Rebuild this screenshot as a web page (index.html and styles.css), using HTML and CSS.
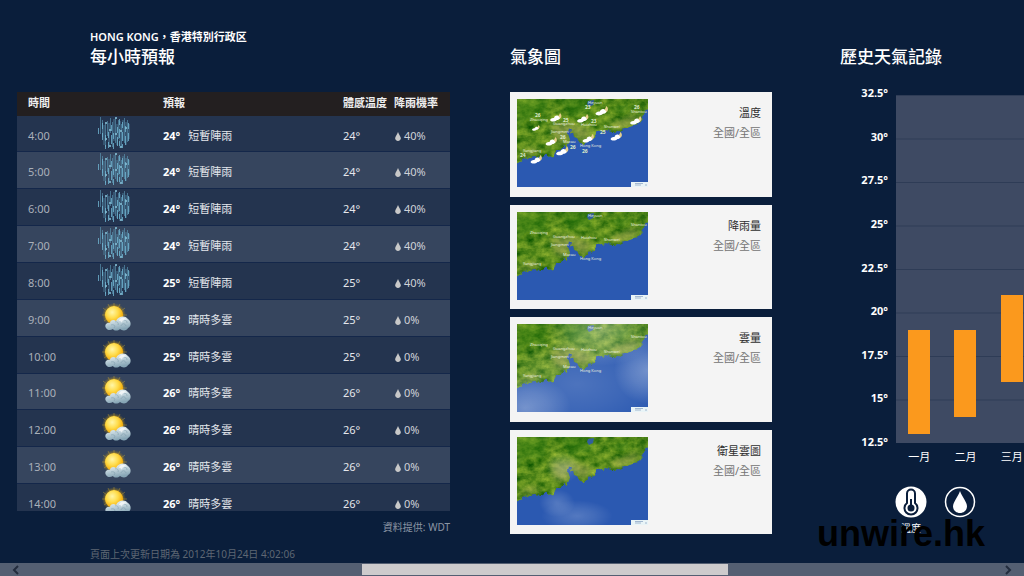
FILE: index.html
```html
<!DOCTYPE html>
<html lang="zh-Hant">
<head>
<meta charset="utf-8">
<meta name="viewport" content="width=device-width, initial-scale=1">
<title>天氣 - 香港</title>
<link rel="stylesheet" href="styles.css">
</head>
<body>
<svg class="defs" width="0" height="0" aria-hidden="true">
  <defs>
    <radialGradient id="sunFill" cx="0.4" cy="0.35" r="0.65">
      <stop offset="0" stop-color="#fff6a8"/><stop offset="0.5" stop-color="#ffdc4a"/><stop offset="1" stop-color="#f2a400"/>
    </radialGradient>
    <radialGradient id="sunGlow">
      <stop offset="0.6" stop-color="#e8a800" stop-opacity="0.8"/><stop offset="1" stop-color="#a08020" stop-opacity="0"/>
    </radialGradient>
    <linearGradient id="cloudFill" x1="0" y1="0" x2="0.3" y2="1">
      <stop offset="0" stop-color="#f2f8fa"/><stop offset="0.5" stop-color="#c3d5dd"/><stop offset="1" stop-color="#86a5b5"/>
    </linearGradient>
    <radialGradient id="haze"><stop offset="0" stop-color="#fff" stop-opacity="0.32"/><stop offset="0.5" stop-color="#fff" stop-opacity="0.18"/><stop offset="1" stop-color="#fff" stop-opacity="0"/></radialGradient>
    <filter id="terrain" x="0" y="0" width="1" height="1" color-interpolation-filters="sRGB">
      <feTurbulence type="fractalNoise" baseFrequency="0.1 0.13" numOctaves="4" seed="8"/>
      <feColorMatrix values="0.7 0 0 0 -0.01  0.5 0 0 0 0.29  0.25 0 0 0 -0.02  0 0 0 0 1"/>
    </filter>
    <filter id="rough" x="-0.1" y="-0.1" width="1.2" height="1.2">
      <feTurbulence type="fractalNoise" baseFrequency="0.2" numOctaves="2" seed="3"/>
      <feDisplacementMap in="SourceGraphic" scale="5" xChannelSelector="R" yChannelSelector="G"/>
    </filter>
    <filter id="soft"><feGaussianBlur stdDeviation="3"/></filter>
    <mask id="landMask">
      <path filter="url(#rough)" fill="#fff" d="M-6-6H140V2L131 10L127 15L125 20L121 25L114 28L108 29L103 32L95 33L90 31L83 32L77 35L75 40L70 41L67 46L63 43L60 38L56 37L54 32L52 29L51 34L53 41L50 48L46 46L44 51L39 51L36 57L32 58L29 55L24 58L17 57L11 59L5 61L-6 66Z"/>
    </mask>
    <symbol id="rain" viewBox="0 0 34 34">
      <g fill="none" stroke="#5f9fbd">
        <path opacity="0.6" d="M3.500 1V18M5.500 4V21M8.500 8V31M10.500 5V20M13.500 2V17M15.500 6V31M18.500 2V27M21.500 4V23M24.500 8V31M27.500 2V27M30.500 4V26"/>
        <path opacity="0.3" stroke-width="2" d="M7 9V29M12 7V30M17 3V25M20 8V29M23 5V32M26 4V25M29 6V29M32 8V23"/>
        <path opacity="0.75" stroke="#74bcd9" stroke-dasharray="6 4 9 3" d="M1.500 12V21M5.500 7V24M8.500 19V33M11.500 16V32M14.500 9V28M16.500 17V33M20.500 11V30M22.500 3V30M25.500 6V32M28.500 10V30M31.500 7V25"/>
        <path opacity="0.8" stroke="#83bdd3" stroke-width="2" stroke-dasharray="2 14" d="M9 6V29M13 13V33M19 1V32M24 14V33M29 11V27"/>
      </g>
    </symbol>
    <symbol id="suncloud" viewBox="0 0 30 30">
      <circle cx="12" cy="12" r="12" fill="url(#sunGlow)"/>
      <path stroke="#edbd29" stroke-width="0.7" opacity="0.5" d="M12-1V4M6 1L8 5M1 5L5 8M-1 12H4M2 18L5 16M5 23L8 19M12 25V20M18 1L16 5M23 5L19 8M25 12H20"/>
      <circle cx="12" cy="12" r="9" fill="url(#sunFill)"/>
      <path fill="url(#cloudFill)" d="M4 25C2 22 5 19 8 20C8 17 12 16 14 18C16 13 23 12 26 16C30 19 29 24 26 25C25 28 20 28 18 26C16 28 12 28 11 26C8 28 5 27 4 25Z"/>
      <path fill="none" stroke="#7897a7" stroke-width="1" opacity="0.5" d="M13 19C15 18 17 20 16 22M9 22C12 21 14 23 12 25M19 23C20 20 23 20 24 23M22 17C24 17 25 18 25 20"/>
      <path fill="#fff" opacity="0.7" d="M17 18C18 14 23 14 25 17C22 16 20 17 20 20C19 18 18 18 17 18Z"/>
    </symbol>
    <symbol id="drop" viewBox="0 0 14 22"><path d="M7 0C9 6 14 11 14 15.500C14 19 11 22 7 22S0 19 0 15.500C0 11 5 6 7 0Z"/></symbol>
    <symbol id="map" viewBox="0 0 131 88">
      <rect width="131" height="88" fill="#2b59b1"/>
      <g mask="url(#landMask)">
        <rect width="131" height="88" filter="url(#terrain)"/>
        <path filter="url(#soft)" fill="#b7ad66" opacity="0.5" d="M34 26L51 24L64 27L76 32L66 44L54 33L50 46L38 42ZM90 27L118 16L124 20L105 30ZM0 58L14 50L24 53L10 58Z"/>
        <path filter="url(#soft)" fill="#2a780c" opacity="0.4" d="M0 0H32L26 22L8 20L0 38ZM42 0H70L78 14L52 18ZM90 8L116 4L106 16Z"/>
      </g>
      <path fill="#315f9a" d="M71 2L77 1L76 6L72 8L70 5Z"/>
      <path fill="#e9f4f7" d="M114 83H131V88H114Z"/>
      <path stroke="#8fa8c6" stroke-width="0.8" d="M118 84.500H126M118 86H124M128 86H130"/>
    </symbol>
    <symbol id="moon" viewBox="0 0 12 9">
      <path fill="#e6cf8d" d="M10 0C12 2 12 5 9 6C7 7 5 6 4 5C7 5 9 3 10 0Z"/>
      <path fill="#fff" d="M0 7C1 5 3 5 4 5C5 2 8 2 9 4C11 5 9 7 7 7C5 9 1 9 0 7Z"/>
    </symbol>
    <symbol id="places" viewBox="0 0 131 88">
      <g class="place">
        <text x="71" y="5">Heyuan</text><text x="13" y="22">Zhaoqing</text>
        <text x="36" y="26">Guangzhou</text><text x="64" y="27">Huizhou</text>
        <text x="34" y="34">Jiangmen</text><text x="46" y="44">Macau</text>
        <text x="63" y="48">Hong Kong</text><text x="6" y="53">Yangjiang</text>
        <text x="87" y="29">Shanwei</text><text x="114" y="14">Shantou</text>
      </g>
    </symbol>
  </defs>
</svg>

<main class="hub">
  <section class="panel hourly">
    <header class="panel-head inset">
      <p class="place-name">HONG KONG，香港特別行政区</p>
      <h1 class="title">每小時預報</h1>
    </header>
    <div class="table-clip">
      <table class="forecast">
        <colgroup><col class="c-time"><col class="c-icon"><col class="c-sky"><col class="c-feel"><col class="c-rain"></colgroup>
        <thead><tr><th scope="col">時間</th><th></th><th scope="col">預報</th><th scope="col">體感溫度</th><th scope="col">降雨機率</th></tr></thead>
        <tbody>
          <tr><td>4:00</td><td><svg class="rain"><use href="#rain"/></svg></td><td><b>24°</b>短暫陣雨</td><td>24°</td><td><svg class="drop"><use href="#drop"/></svg>40%</td></tr>
          <tr><td>5:00</td><td><svg class="rain"><use href="#rain"/></svg></td><td><b>24°</b>短暫陣雨</td><td>24°</td><td><svg class="drop"><use href="#drop"/></svg>40%</td></tr>
          <tr><td>6:00</td><td><svg class="rain"><use href="#rain"/></svg></td><td><b>24°</b>短暫陣雨</td><td>24°</td><td><svg class="drop"><use href="#drop"/></svg>40%</td></tr>
          <tr><td>7:00</td><td><svg class="rain"><use href="#rain"/></svg></td><td><b>24°</b>短暫陣雨</td><td>24°</td><td><svg class="drop"><use href="#drop"/></svg>40%</td></tr>
          <tr><td>8:00</td><td><svg class="rain"><use href="#rain"/></svg></td><td><b>25°</b>短暫陣雨</td><td>25°</td><td><svg class="drop"><use href="#drop"/></svg>40%</td></tr>
          <tr><td>9:00</td><td><svg class="sun"><use href="#suncloud"/></svg></td><td><b>25°</b>晴時多雲</td><td>25°</td><td><svg class="drop"><use href="#drop"/></svg>0%</td></tr>
          <tr><td>10:00</td><td><svg class="sun"><use href="#suncloud"/></svg></td><td><b>25°</b>晴時多雲</td><td>25°</td><td><svg class="drop"><use href="#drop"/></svg>0%</td></tr>
          <tr><td>11:00</td><td><svg class="sun"><use href="#suncloud"/></svg></td><td><b>26°</b>晴時多雲</td><td>26°</td><td><svg class="drop"><use href="#drop"/></svg>0%</td></tr>
          <tr><td>12:00</td><td><svg class="sun"><use href="#suncloud"/></svg></td><td><b>26°</b>晴時多雲</td><td>26°</td><td><svg class="drop"><use href="#drop"/></svg>0%</td></tr>
          <tr><td>13:00</td><td><svg class="sun"><use href="#suncloud"/></svg></td><td><b>26°</b>晴時多雲</td><td>26°</td><td><svg class="drop"><use href="#drop"/></svg>0%</td></tr>
          <tr><td>14:00</td><td><svg class="sun"><use href="#suncloud"/></svg></td><td><b>26°</b>晴時多雲</td><td>26°</td><td><svg class="drop"><use href="#drop"/></svg>0%</td></tr>
        </tbody>
      </table>
    </div>
    <p class="source">資料提供: WDT</p>
    <p class="updated">頁面上次更新日期為 2012年10月24日 4:02:06</p>
  </section>

  <section class="panel maps">
    <header class="panel-head"><h2 class="title">氣象圖</h2></header>
    <div class="cards">
      <a class="card" href="#temperature">
        <svg class="map" viewBox="0 0 131 88"><use href="#map"/><use href="#places"/>
          <g>
            <use href="#moon" x="15" y="25" width="8" height="8"/><use href="#moon" x="33" y="14" width="12" height="9"/>
            <use href="#moon" x="60" y="15" width="12" height="9"/><use href="#moon" x="78" y="7" width="14" height="10"/>
            <use href="#moon" x="113" y="17" width="12" height="9"/><use href="#moon" x="28" y="38" width="13" height="9"/>
            <use href="#moon" x="65" y="35" width="13" height="9"/><use href="#moon" x="93" y="33" width="13" height="9"/>
            <use href="#moon" x="39" y="47" width="13" height="10"/><use href="#moon" x="13" y="56" width="13" height="9"/>
          </g>
          <g class="reading"><text x="18" y="18">26</text><text x="46" y="23">25</text><text x="68" y="10">23</text><text x="74" y="24">23</text><text x="117" y="10">26</text><text x="43" y="40">26</text><text x="53" y="50">26</text><text x="83" y="35">25</text><text x="65" y="54">26</text><text x="3" y="58">24</text></g>
        </svg>
        <span class="card-text"><strong>溫度</strong><span>全國/全區</span></span>
      </a>
      <a class="card" href="#rainfall">
        <svg class="map" viewBox="0 0 131 88"><use href="#map"/><use href="#places"/></svg>
        <span class="card-text"><strong>降雨量</strong><span>全國/全區</span></span>
      </a>
      <a class="card" href="#clouds">
        <svg class="map" viewBox="0 0 131 88"><use href="#map"/>
          <g fill="url(#haze)"><ellipse cx="84" cy="6" rx="56" ry="36"/><ellipse cx="131" cy="46" rx="34" ry="34"/><ellipse cx="8" cy="84" rx="46" ry="32"/><ellipse cx="60" cy="60" rx="90" ry="50" opacity="0.5"/></g>
          <path fill="#e9f4f7" d="M114 83H131V88H114Z"/><path stroke="#8fa8c6" stroke-width="0.8" d="M118 84.500H126M118 86H124M128 86H130"/><use href="#places"/></svg>
        <span class="card-text"><strong>雲量</strong><span>全國/全區</span></span>
      </a>
      <a class="card" href="#satellite">
        <svg class="map" viewBox="0 0 131 88"><use href="#map"/><g fill="url(#haze)" opacity="0.6"><ellipse cx="60" cy="79" rx="36" ry="16"/><ellipse cx="40" cy="66" rx="18" ry="14"/><ellipse cx="46" cy="30" rx="18" ry="16"/></g></svg>
        <span class="card-text"><strong>衛星雲圖</strong><span>全國/全區</span></span>
      </a>
    </div>
  </section>

  <section class="panel history">
    <header class="panel-head"><h2 class="title">歷史天氣記錄</h2></header>
    <div class="chart">
      <div class="axis"><span>32.5°</span><span>30°</span><span>27.5°</span><span>25°</span><span>22.5°</span><span>20°</span><span>17.5°</span><span>15°</span><span>12.5°</span></div>
      <div class="plot">
        <div class="bar" style="grid-row: 28 / 40"></div>
        <div class="bar" style="grid-row: 28 / 38"></div>
        <div class="bar" style="grid-row: 24 / 34"></div>
      </div>
      <div class="months"><span>一月</span><span>二月</span><span>三月</span></div>
    </div>
    <div class="modes">
      <button class="mode" type="button" aria-pressed="true">
        <svg class="mode-icon" viewBox="0 0 32 32"><circle cx="16" cy="16" r="15.500" fill="#fff"/>
          <path fill="#fff" stroke="#0b1e3b" stroke-width="2" d="M12 17V7.500A4 4 0 0 1 20 7.500V17A6.500 6.500 0 1 1 12 17Z"/>
          <path stroke="#0b1e3b" stroke-width="2" d="M16 13V21"/><circle cx="16" cy="22" r="3.500" fill="#0b1e3b"/></svg>
        <span>溫度</span>
      </button>
      <button class="mode" type="button" aria-label="降雨量">
        <svg class="mode-icon" viewBox="0 0 32 32"><circle cx="16" cy="16" r="14.500" fill="none" stroke="#fff" stroke-width="1.500"/><use href="#drop" x="9" y="5" width="14" height="22" fill="#fff"/></svg>
      </button>
    </div>
  </section>
</main>

<div class="watermark">unwire.hk</div>

<nav class="scrollbar" aria-label="水平捲動">
  <button class="arrow" type="button" aria-label="向左"><svg viewBox="0 0 8 10"><path d="M6 1L2 5L6 9"/></svg></button>
  <div class="track"><div class="thumb" style="margin-left: 34.4%; width: 38.1%"></div></div>
  <button class="arrow" type="button" aria-label="向右"><svg viewBox="0 0 8 10"><path d="M2 1L6 5L2 9"/></svg></button>
</nav>
</body>
</html>
```
FILE: styles.css
```css
* { box-sizing: border-box; }

body {
  margin: 0;
  min-height: 100vh;
  display: flex;
  flex-direction: column;
  position: relative;
  overflow: hidden;
  background: #0a1e3b;
  color: #fff;
  font: 11px/16px "Noto Sans", "Noto Sans CJK TC", sans-serif;
}

p, h1, h2 { margin: 0; }

button {
  margin: 0;
  padding: 0;
  border: 0;
  background: none;
  color: inherit;
  font: inherit;
}

.defs { position: absolute; }

.hub {
  flex: 1;
  display: grid;
  grid-template-columns: 433px 262px minmax(195px, 1fr);
  column-gap: 60px;
  padding: 29px 0 0 17px;
}

.history { padding-left: 8px; }

.panel-head {
  height: 63px;
  display: flex;
  flex-direction: column;
  justify-content: flex-end;
  padding-bottom: 23px;
}

.inset { padding-left: 73px; }
.place-name { font-weight: 600; }

.title {
  font-size: 17px;
  line-height: 24px;
  font-weight: 500;
}

/* Hourly forecast */
.table-clip {
  height: 419px;
  overflow: hidden;
}

.forecast {
  width: 100%;
  height: 429px;
  table-layout: fixed;
  border-collapse: collapse;
}

.c-time { width: 63px; }
.c-icon { width: 83px; }
.c-sky { width: 180px; }
.c-feel { width: 51px; }

.forecast th, .forecast td {
  padding: 0;
  text-align: left;
  white-space: nowrap;
}

.forecast thead { background: #231f20; }
.forecast th { height: 24px; padding-bottom: 3px; font-weight: 700; color: #eee; }
.forecast td { padding-top: 4px; color: #e4e7ec; border-bottom: 1px solid #14274a; }
.forecast tbody tr { background: #24344f; }
.forecast tbody tr:nth-child(even) { background: #36455e; }
.forecast th:first-child, .forecast td:first-child { padding-left: 11px; }
.forecast td:first-child { color: #aab0ba; }
.forecast td:last-child { color: #cfd2d8; }
.forecast td:nth-child(2) { padding: 0; }
.forecast b { margin-right: 8px; color: #fff; }

/* Icons bleed into the row's spare height so that all rows share one height */
.rain, .sun { display: block; }
.rain { width: 34px; height: 34px; margin: -9px 0 -7px 17px; }
.sun { width: 30px; height: 30px; margin: -6px 0 -6px 22px; }
.drop { width: 6px; height: 9px; margin: 0 3px 0 1px; fill: #c8c8c8; vertical-align: -1px; }

.source {
  padding-top: 8px;
  text-align: right;
  font-size: 10px;
  color: #8b95a4;
}

.updated {
  padding: 11px 0 0 73px;
  font-size: 10px;
  color: #5e6773;
}

/* Map cards */
.cards {
  height: 442px;
  display: flex;
  flex-direction: column;
  gap: 8px;
}

.card {
  flex: 1;
  display: flex;
  justify-content: space-between;
  padding: 7px 11px 0 7px;
  background: #f4f4f4;
  color: #737373;
  text-decoration: none;
}

.map { width: 131px; height: 88px; }

.card-text {
  display: flex;
  flex-direction: column;
  gap: 4px;
  padding-top: 6px;
  text-align: right;
}

.card-text strong { font-weight: 400; color: #2e2e2e; }

.place { font: 4px "Noto Sans", sans-serif; fill: #e8eddf; }
.reading { font: 700 5px "Noto Sans", sans-serif; fill: #dce8c8; }

/* Climate chart */
.chart {
  display: grid;
  grid-template-columns: 48px minmax(139px, 1fr);
  grid-template-rows: 348px auto;
  column-gap: 8px;
  padding-top: 3px;
}

.axis {
  display: flex;
  flex-direction: column;
  justify-content: space-between;
  margin: -10px 0 -7px;
  text-align: right;
  font-weight: 700;
}

.plot {
  display: grid;
  grid-template-columns: repeat(3, 1fr);
  grid-template-rows: repeat(40, 1fr);
  justify-items: center;
  background: linear-gradient(#2e3c56 1px, #3e4a63 1px) 0 0 / 100% 12.5%;
}

.bar { width: 22px; background: #fb991d; }
.bar:nth-child(1) { grid-column: 1; }
.bar:nth-child(2) { grid-column: 2; }
.bar:nth-child(3) { grid-column: 3; }

.months {
  grid-column: 2;
  display: grid;
  grid-template-columns: repeat(3, 1fr);
  padding-top: 6px;
  text-align: center;
}

.modes {
  display: flex;
  align-items: flex-start;
  gap: 17px;
  padding: 21px 0 0 55px;
}

.mode {
  width: 32px;
  display: flex;
  flex-direction: column;
  align-items: center;
  gap: 2px;
  font-size: 10px;
}

.mode-icon { width: 32px; height: 32px; }

.watermark {
  position: absolute;
  right: 39px;
  bottom: 22px;
  color: #000;
  font: 700 36px/40px "Liberation Sans", sans-serif;
}

/* Page scrollbar */
.scrollbar {
  height: 13px;
  display: flex;
  background: #545f72;
}

.arrow { width: 32px; display: flex; justify-content: center; align-items: center; }
.arrow svg { width: 8px; height: 10px; fill: none; stroke: #222c3d; stroke-width: 2; }
.track { flex: 1; padding: 1px 0; }
.thumb { height: 100%; background: #cdcbcc; }
```
